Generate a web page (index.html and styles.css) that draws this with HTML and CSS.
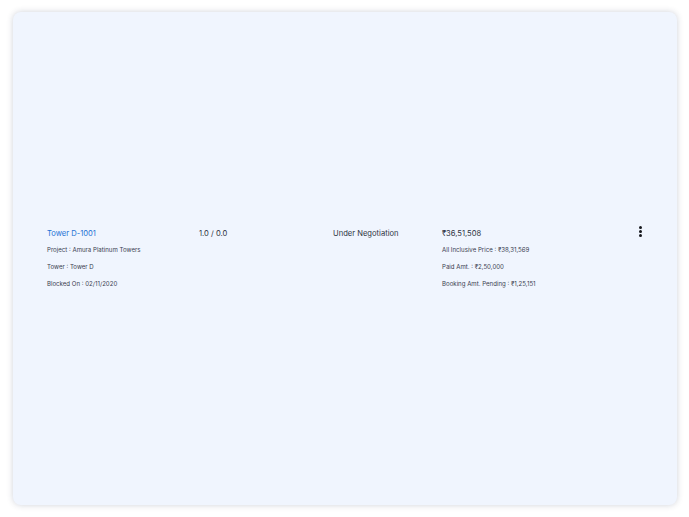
FILE: index.html
```html
<!DOCTYPE html>
<html>
<head>
  <meta name="viewport" content="width=device-width, initial-scale=1.0">
  <link rel="stylesheet" href="styles.css">
</head>
<body>
  <div class="card">
    <div class="row">
      <div class="col">
        <div class="title link">Tower D-1001</div>
        <div class="detail">Project : Amura Platinum Towers</div>
        <div class="detail">Tower : Tower D</div>
        <div class="detail">Blocked On : 02/11/2020</div>
      </div>
      <div class="col">
        <div class="title">1.0 / 0.0</div>
      </div>
      <div class="col">
        <div class="title">Under Negotiation</div>
      </div>
      <div class="col">
        <div class="title">₹36,51,508</div>
        <div class="detail">All Inclusive Price : ₹38,31,569</div>
        <div class="detail">Paid Amt. : ₹2,50,000</div>
        <div class="detail">Booking Amt. Pending : ₹1,25,151</div>
      </div>
      <div class="menu">
        <span class="dot"></span>
        <span class="dot"></span>
        <span class="dot"></span>
      </div>
    </div>
  </div>
</body>
</html>
```

FILE: styles.css
```css
html, body {
  margin: 0;
  padding: 0;
  height: 100%;
  background: #fff;
  font-family: Inter, "Noto Sans", sans-serif;
}
body {
  box-sizing: border-box;
  padding: 12px 12px 12px 13px;
}
.card {
  height: 100%;
  box-sizing: border-box;
  background: #f0f5fe;
  border-radius: 8px;
  box-shadow: 0 0 6px rgba(40, 50, 80, 0.22);
  display: flex;
  align-items: center;
  padding: 0 34px 0 34px;
}
.row {
  width: 100%;
  display: grid;
  grid-template-columns: 152px 134px 109px 1fr 6px;
  margin-top: -3px;
}
.title {
  font-size: 7.6px;
  line-height: 12px;
  padding-top: 1px;
  color: #2e3442;
}
.link {
  color: #1c72d4;
}
.detail {
  font-size: 6.1px;
  line-height: 9px;
  margin-top: 8px;
  color: #3a4050;
}
.title + .detail {
  margin-top: 5px;
}
.menu {
  display: flex;
  flex-direction: column;
  align-items: center;
  gap: 1px;
  margin-top: -1px;
}
.dot {
  width: 3px;
  height: 3px;
  border-radius: 50%;
  background: #15171c;
}
```
